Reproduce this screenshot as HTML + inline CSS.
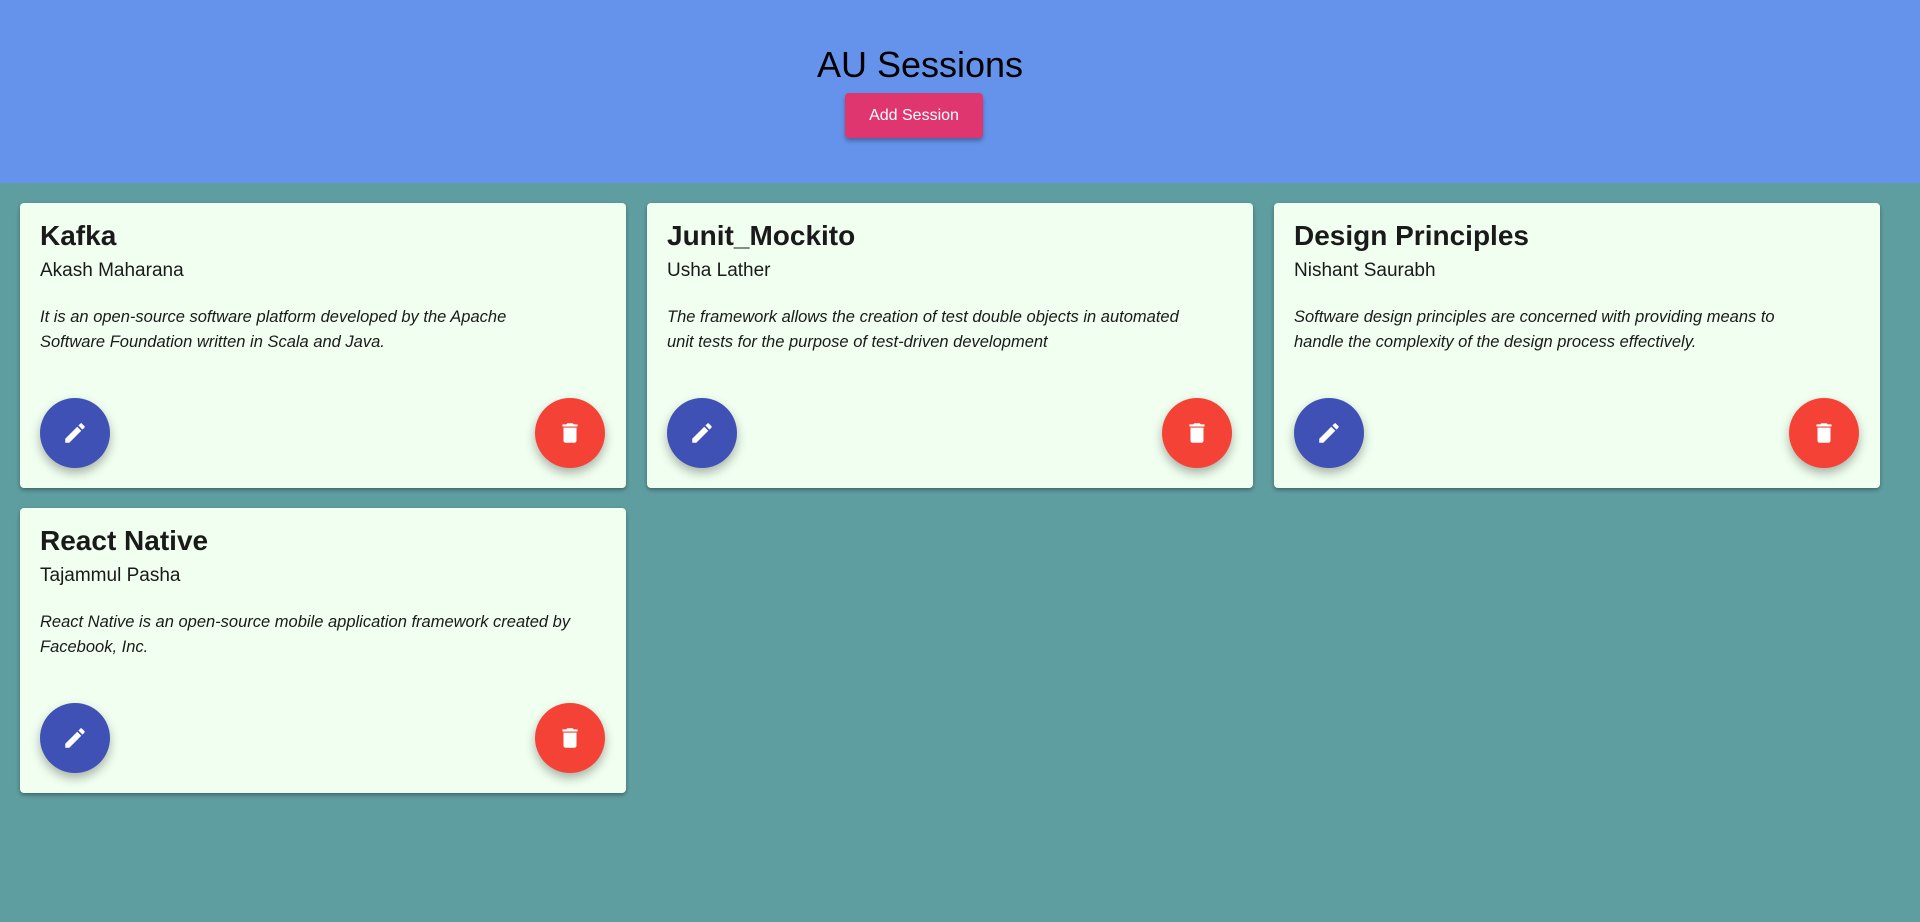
<!DOCTYPE html>
<html><head><style>
*{box-sizing:border-box;margin:0;padding:0}
body{width:1920px;height:922px;background:#5F9EA0;font-family:"Liberation Sans",sans-serif;position:relative;overflow:hidden}
.hdr{position:absolute;left:0;top:0;width:1920px;height:183px;background:#6593EB}
.hdr h1{position:absolute;left:0;width:1840px;top:44px;text-align:center;font-weight:400;font-size:36px;color:#000}
.add{position:absolute;left:845px;top:93px;width:138px;height:45px;background:#E0366F;color:#fff;border-radius:4px;font-size:16px;line-height:45px;text-align:center;box-shadow:0 3px 4px rgba(0,0,0,.3)}
.card{position:absolute;width:606px;height:285px;background:#F0FFF0;border-radius:4px;box-shadow:0 2px 4px rgba(0,0,0,.35)}
.card h2{position:absolute;left:20px;top:17px;font-size:28px;font-weight:700;color:#1a1a1a}
.card .a{position:absolute;left:20px;top:57px;font-size:19px;color:#1a1a1a}
.card .d{position:absolute;left:20px;top:102px;width:515px;font-size:16.5px;line-height:25px;font-style:italic;color:#1a1a1a}
.b{position:absolute;top:195px;width:70px;height:70px;border-radius:50%;box-shadow:0 5px 10px rgba(0,0,0,.3);display:flex;align-items:center;justify-content:center}
.e{left:20px;background:#3F51B5}.x{right:21px;background:#F44336}
</style></head><body>
<div class="hdr"><h1>AU Sessions</h1><div class="add">Add Session</div></div>

<div class="card" style="left:20px;top:203px"><h2>Kafka</h2><div class="a">Akash Maharana</div><div class="d">It is an open-source software platform developed by the Apache Software Foundation written in Scala and Java.</div>
<div class="b e"><svg width="26" height="26" viewBox="0 0 24 24"><path fill="#fff" d="M3 17.25V21h3.75L17.81 9.94l-3.75-3.75L3 17.25zM20.71 7.04a1 1 0 000-1.41l-2.34-2.34a1 1 0 00-1.41 0l-1.83 1.83 3.75 3.75 1.83-1.83z"/></svg></div>
<div class="b x"><svg width="26" height="26" viewBox="0 0 24 24"><path fill="#fff" d="M6 19c0 1.1.9 2 2 2h8c1.1 0 2-.9 2-2V7H6v12zM19 4h-3.5l-1-1h-5l-1 1H5v2h14V4z"/></svg></div></div>

<div class="card" style="left:647px;top:203px"><h2>Junit_Mockito</h2><div class="a">Usha Lather</div><div class="d">The framework allows the creation of test double objects in automated unit tests for the purpose of test-driven development</div>
<div class="b e"><svg width="26" height="26" viewBox="0 0 24 24"><path fill="#fff" d="M3 17.25V21h3.75L17.81 9.94l-3.75-3.75L3 17.25zM20.71 7.04a1 1 0 000-1.41l-2.34-2.34a1 1 0 00-1.41 0l-1.83 1.83 3.75 3.75 1.83-1.83z"/></svg></div>
<div class="b x"><svg width="26" height="26" viewBox="0 0 24 24"><path fill="#fff" d="M6 19c0 1.1.9 2 2 2h8c1.1 0 2-.9 2-2V7H6v12zM19 4h-3.5l-1-1h-5l-1 1H5v2h14V4z"/></svg></div></div>

<div class="card" style="left:1274px;top:203px"><h2>Design Principles</h2><div class="a">Nishant Saurabh</div><div class="d">Software design principles are concerned with providing means to handle the complexity of the design process effectively.</div>
<div class="b e"><svg width="26" height="26" viewBox="0 0 24 24"><path fill="#fff" d="M3 17.25V21h3.75L17.81 9.94l-3.75-3.75L3 17.25zM20.71 7.04a1 1 0 000-1.41l-2.34-2.34a1 1 0 00-1.41 0l-1.83 1.83 3.75 3.75 1.83-1.83z"/></svg></div>
<div class="b x"><svg width="26" height="26" viewBox="0 0 24 24"><path fill="#fff" d="M6 19c0 1.1.9 2 2 2h8c1.1 0 2-.9 2-2V7H6v12zM19 4h-3.5l-1-1h-5l-1 1H5v2h14V4z"/></svg></div></div>

<div class="card" style="left:20px;top:508px"><h2>React Native</h2><div class="a">Tajammul Pasha</div><div class="d" style="width:545px">React Native is an open-source mobile application framework created by Facebook, Inc.</div>
<div class="b e"><svg width="26" height="26" viewBox="0 0 24 24"><path fill="#fff" d="M3 17.25V21h3.75L17.81 9.94l-3.75-3.75L3 17.25zM20.71 7.04a1 1 0 000-1.41l-2.34-2.34a1 1 0 00-1.41 0l-1.83 1.83 3.75 3.75 1.83-1.83z"/></svg></div>
<div class="b x"><svg width="26" height="26" viewBox="0 0 24 24"><path fill="#fff" d="M6 19c0 1.1.9 2 2 2h8c1.1 0 2-.9 2-2V7H6v12zM19 4h-3.5l-1-1h-5l-1 1H5v2h14V4z"/></svg></div></div>
</body></html>
